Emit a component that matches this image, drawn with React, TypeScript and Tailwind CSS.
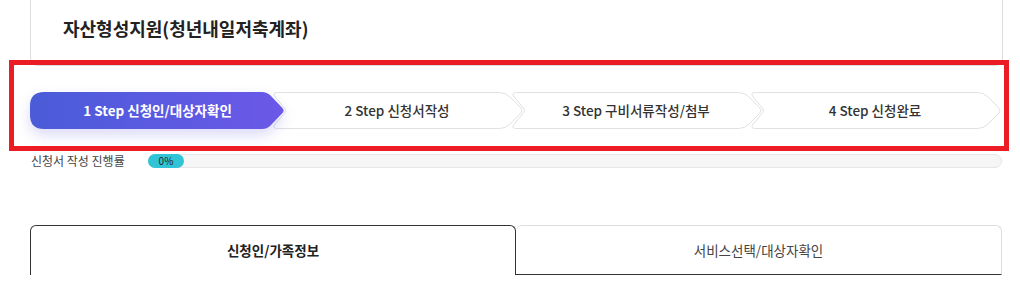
import React from 'react';

type Pt = [number, number, number];

// polygon with per-corner rounding, built from quadratic curves
function roundedPath(pts: Pt[]) {
  const n = pts.length;
  const seg = (i: number) => {
    const [x0, y0] = pts[(i - 1 + n) % n];
    const [x1, y1, r] = pts[i];
    const [x2, y2] = pts[(i + 1) % n];
    const l1 = Math.hypot(x0 - x1, y0 - y1);
    const l2 = Math.hypot(x2 - x1, y2 - y1);
    const r1 = Math.min(r, l1 / 2);
    const r2 = Math.min(r, l2 / 2);
    const a = [x1 + ((x0 - x1) / l1) * r1, y1 + ((y0 - y1) / l1) * r1];
    const b = [x1 + ((x2 - x1) / l2) * r2, y1 + ((y2 - y1) / l2) * r2];
    return { a, b, x1, y1 };
  };
  let d = '';
  for (let i = 0; i < n; i++) {
    const { a, b, x1, y1 } = seg(i);
    d += `${i === 0 ? 'M' : 'L'}${a[0].toFixed(2)},${a[1].toFixed(2)} Q${x1},${y1} ${b[0].toFixed(2)},${b[1].toFixed(2)} `;
  }
  return d + 'Z';
}

const H = 37;
const TIP = 18;
const NOTCH = 15;

const steps = [
  { label: '1 Step 신청인/대상자확인', width: 255 },
  { label: '2 Step 신청서작성', width: 253 },
  { label: '3 Step 구비서류작성/첨부', width: 253 },
  { label: '4 Step 신청완료', width: 253 },
];

function StepShape({ width, first }: { width: number; first: boolean }) {
  const w = width - 0.5;
  const h = H - 0.5;
  const m = 0.5;
  const pts: Pt[] = first
    ? [
        [0, 0, 14],
        [width - TIP, 0, 5],
        [width, H / 2, 4],
        [width - TIP, H, 5],
        [0, H, 14],
      ]
    : [
        [m, m, 6],
        [w - TIP, m, 6],
        [w, H / 2, 4],
        [w - TIP, h, 6],
        [m, h, 6],
        [m + NOTCH, H / 2, 3],
      ];
  return (
    <svg
      width={width}
      height={H}
      viewBox={`0 0 ${width} ${H}`}
      className={first ? 'absolute inset-0 drop-shadow-[0_6px_7px_rgba(90,88,220,0.22)]' : 'absolute inset-0'}
    >
      {first && (
        <defs>
          <linearGradient id="stepGrad" x1="0" y1="0" x2="1" y2="0">
            <stop offset="0" stopColor="#4a5cd8" />
            <stop offset="1" stopColor="#6b58e8" />
          </linearGradient>
        </defs>
      )}
      <path
        d={roundedPath(pts)}
        fill={first ? 'url(#stepGrad)' : '#ffffff'}
        stroke={first ? 'none' : '#e1e1e1'}
        strokeWidth={1}
      />
    </svg>
  );
}

export default function App() {
  return (
    <div
      className="relative w-[1020px] h-[290px] overflow-hidden bg-white"
      style={{ fontFamily: '"Noto Sans CJK KR", "Noto Sans", sans-serif' }}
    >
      {/* title card, top edge is off screen */}
      <div className="ml-[30px] w-[973px] h-[66px] border-x border-b border-[#dddddd] rounded-b-[8px] flex items-center pl-[32px] pb-[8px]">
        <h2 className="text-[18px] font-bold text-[#222222]">자산형성지원(청년내일저축계좌)</h2>
      </div>

      {/* steps */}
      <div className="ml-[30px] mt-[26px] flex h-[37px]">
        {steps.map((s, i) => (
          <div
            key={s.label}
            className={
              i === 0
                ? 'relative z-[4] shrink-0 h-[37px]'
                : i === 1
                ? 'relative z-[3] shrink-0 h-[37px] -ml-[14px]'
                : i === 2
                ? 'relative z-[2] shrink-0 h-[37px] -ml-[14px]'
                : 'relative z-[1] shrink-0 h-[37px] -ml-[14px]'
            }
            style={{ width: s.width }}
          >
            <StepShape width={s.width} first={i === 0} />
            <div
              className={
                i === 0
                  ? 'relative h-full flex items-center justify-center text-[13.5px] font-bold text-white'
                  : 'relative h-full flex items-center justify-center pr-[1px] text-[13.5px] font-medium text-[#333333]'
              }
            >
              {s.label}
            </div>
          </div>
        ))}
      </div>

      {/* progress */}
      <div className="ml-[31px] mt-[25px] flex items-center h-[14px]">
        <span className="w-[117px] text-[12px] text-[#444444] leading-none">신청서 작성 진행률</span>
        <div className="w-[854px] h-[14px] rounded-full bg-[#f6f6f6] border border-[#e6e6e6] flex">
          <div className="w-[36px] -m-px h-[14px] rounded-full bg-[#31c4d6] flex items-center justify-center text-[10px] text-[#222222] leading-none">
            0%
          </div>
        </div>
      </div>

      {/* tabs */}
      <div className="ml-[30px] mt-[57px] flex w-[972px] h-[50px]">
        <div className="w-[486px] h-[50px] border-x border-t border-[#333333] rounded-t-[6px] flex items-center justify-center text-[13.5px] font-bold text-[#222222]">
          신청인/가족정보
        </div>
        <div className="w-[486px] h-[50px] border-t border-r border-[#dddddd] rounded-t-[6px] border-b-[#333333] border-b flex items-center justify-center text-[13.5px] text-[#444444]">
          서비스선택/대상자확인
        </div>
      </div>

      {/* red highlight overlay */}
      <div className="absolute left-[9px] top-[60px] w-[1000px] h-[91px] border-[5px] border-[#ec1c24] pointer-events-none" />
    </div>
  );
}
